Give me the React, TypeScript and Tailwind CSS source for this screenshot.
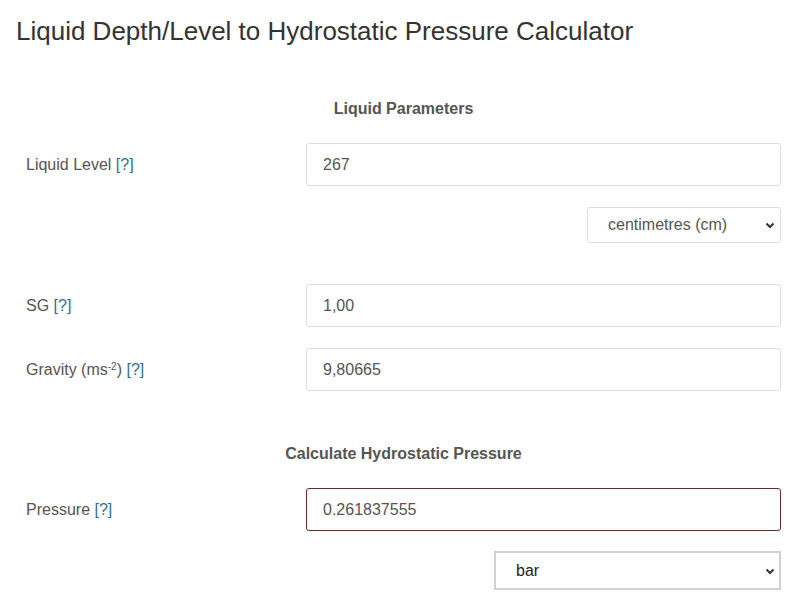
import { ReactNode } from 'react';

function Help() {
  return <span className="text-[#2f6f8c]">[?]</span>;
}

function Row({ label, children }: { label: ReactNode; children: ReactNode }) {
  return (
    <div className="flex items-center">
      <div className="w-[280px] text-[16px] text-[#555]">{label}</div>
      <div className="flex-1">{children}</div>
    </div>
  );
}

function Field({ value, error }: { value: string; error?: boolean }) {
  return (
    <input
      readOnly
      value={value}
      className={
        error
          ? 'block h-[43px] w-full rounded-[3px] border border-[#6b2a2a] bg-white px-4 text-[16px] text-[#555] outline-none'
          : 'block h-[43px] w-full rounded-[3px] border border-[#dcdcdc] bg-white px-4 text-[16px] text-[#555] outline-none'
      }
    />
  );
}

function Chevron() {
  return (
    <svg
      className="pointer-events-none absolute right-[5px] top-1/2 h-[12px] w-[12px] -translate-y-1/2"
      viewBox="0 0 12 12"
      fill="none"
      stroke="#333"
      strokeWidth="2"
    >
      <path d="M2.5 4.5 6 8l3.5-3.5" />
    </svg>
  );
}

function Heading({ children }: { children: ReactNode }) {
  return (
    <div className="text-center text-[16px] font-bold leading-[20px] text-[#555]">{children}</div>
  );
}

export default function App() {
  return (
    <div className="min-h-screen bg-white font-['Liberation_Sans',Arial,sans-serif]">
      <h1 className="pl-4 pt-4 text-[26px] leading-[30px] text-[#333]">
        Liquid Depth/Level to Hydrostatic Pressure Calculator
      </h1>

      <div className="pl-[26px] pr-[19px]">
        <div className="mt-[53px]">
          <Heading>Liquid Parameters</Heading>
        </div>

        <div className="mt-[24px]">
          <Row label={<>Liquid Level <Help /></>}>
            <Field value="267" />
          </Row>
        </div>

        <div className="mt-[21px] flex justify-end">
          <div className="relative w-[194px]">
            <select
              defaultValue="cm"
              className="block h-[36px] w-full appearance-none rounded-[3px] border border-[#dcdcdc] bg-white pl-[20px] text-[16px] text-[#555] outline-none"
            >
              <option value="cm">centimetres (cm)</option>
            </select>
            <Chevron />
          </div>
        </div>

        <div className="mt-[41px]">
          <Row label={<>SG <Help /></>}>
            <Field value="1,00" />
          </Row>
        </div>

        <div className="mt-[21px]">
          <Row
            label={
              <>
                Gravity (ms<sup className="text-[10px]">-2</sup>) <Help />
              </>
            }
          >
            <Field value="9,80665" />
          </Row>
        </div>

        <div className="mt-[53px]">
          <Heading>Calculate Hydrostatic Pressure</Heading>
        </div>

        <div className="mt-[24px]">
          <Row label={<>Pressure <Help /></>}>
            <Field value="0.261837555" error />
          </Row>
        </div>

        <div className="mt-[20px] flex justify-end">
          <div className="relative w-[287px]">
            <select
              defaultValue="bar"
              className="block h-[39px] w-full appearance-none border-2 border-[#d0d0d0] bg-white pl-[20px] text-[16px] text-[#222] outline-none"
            >
              <option value="bar">bar</option>
            </select>
            <Chevron />
          </div>
        </div>
      </div>
    </div>
  );
}
